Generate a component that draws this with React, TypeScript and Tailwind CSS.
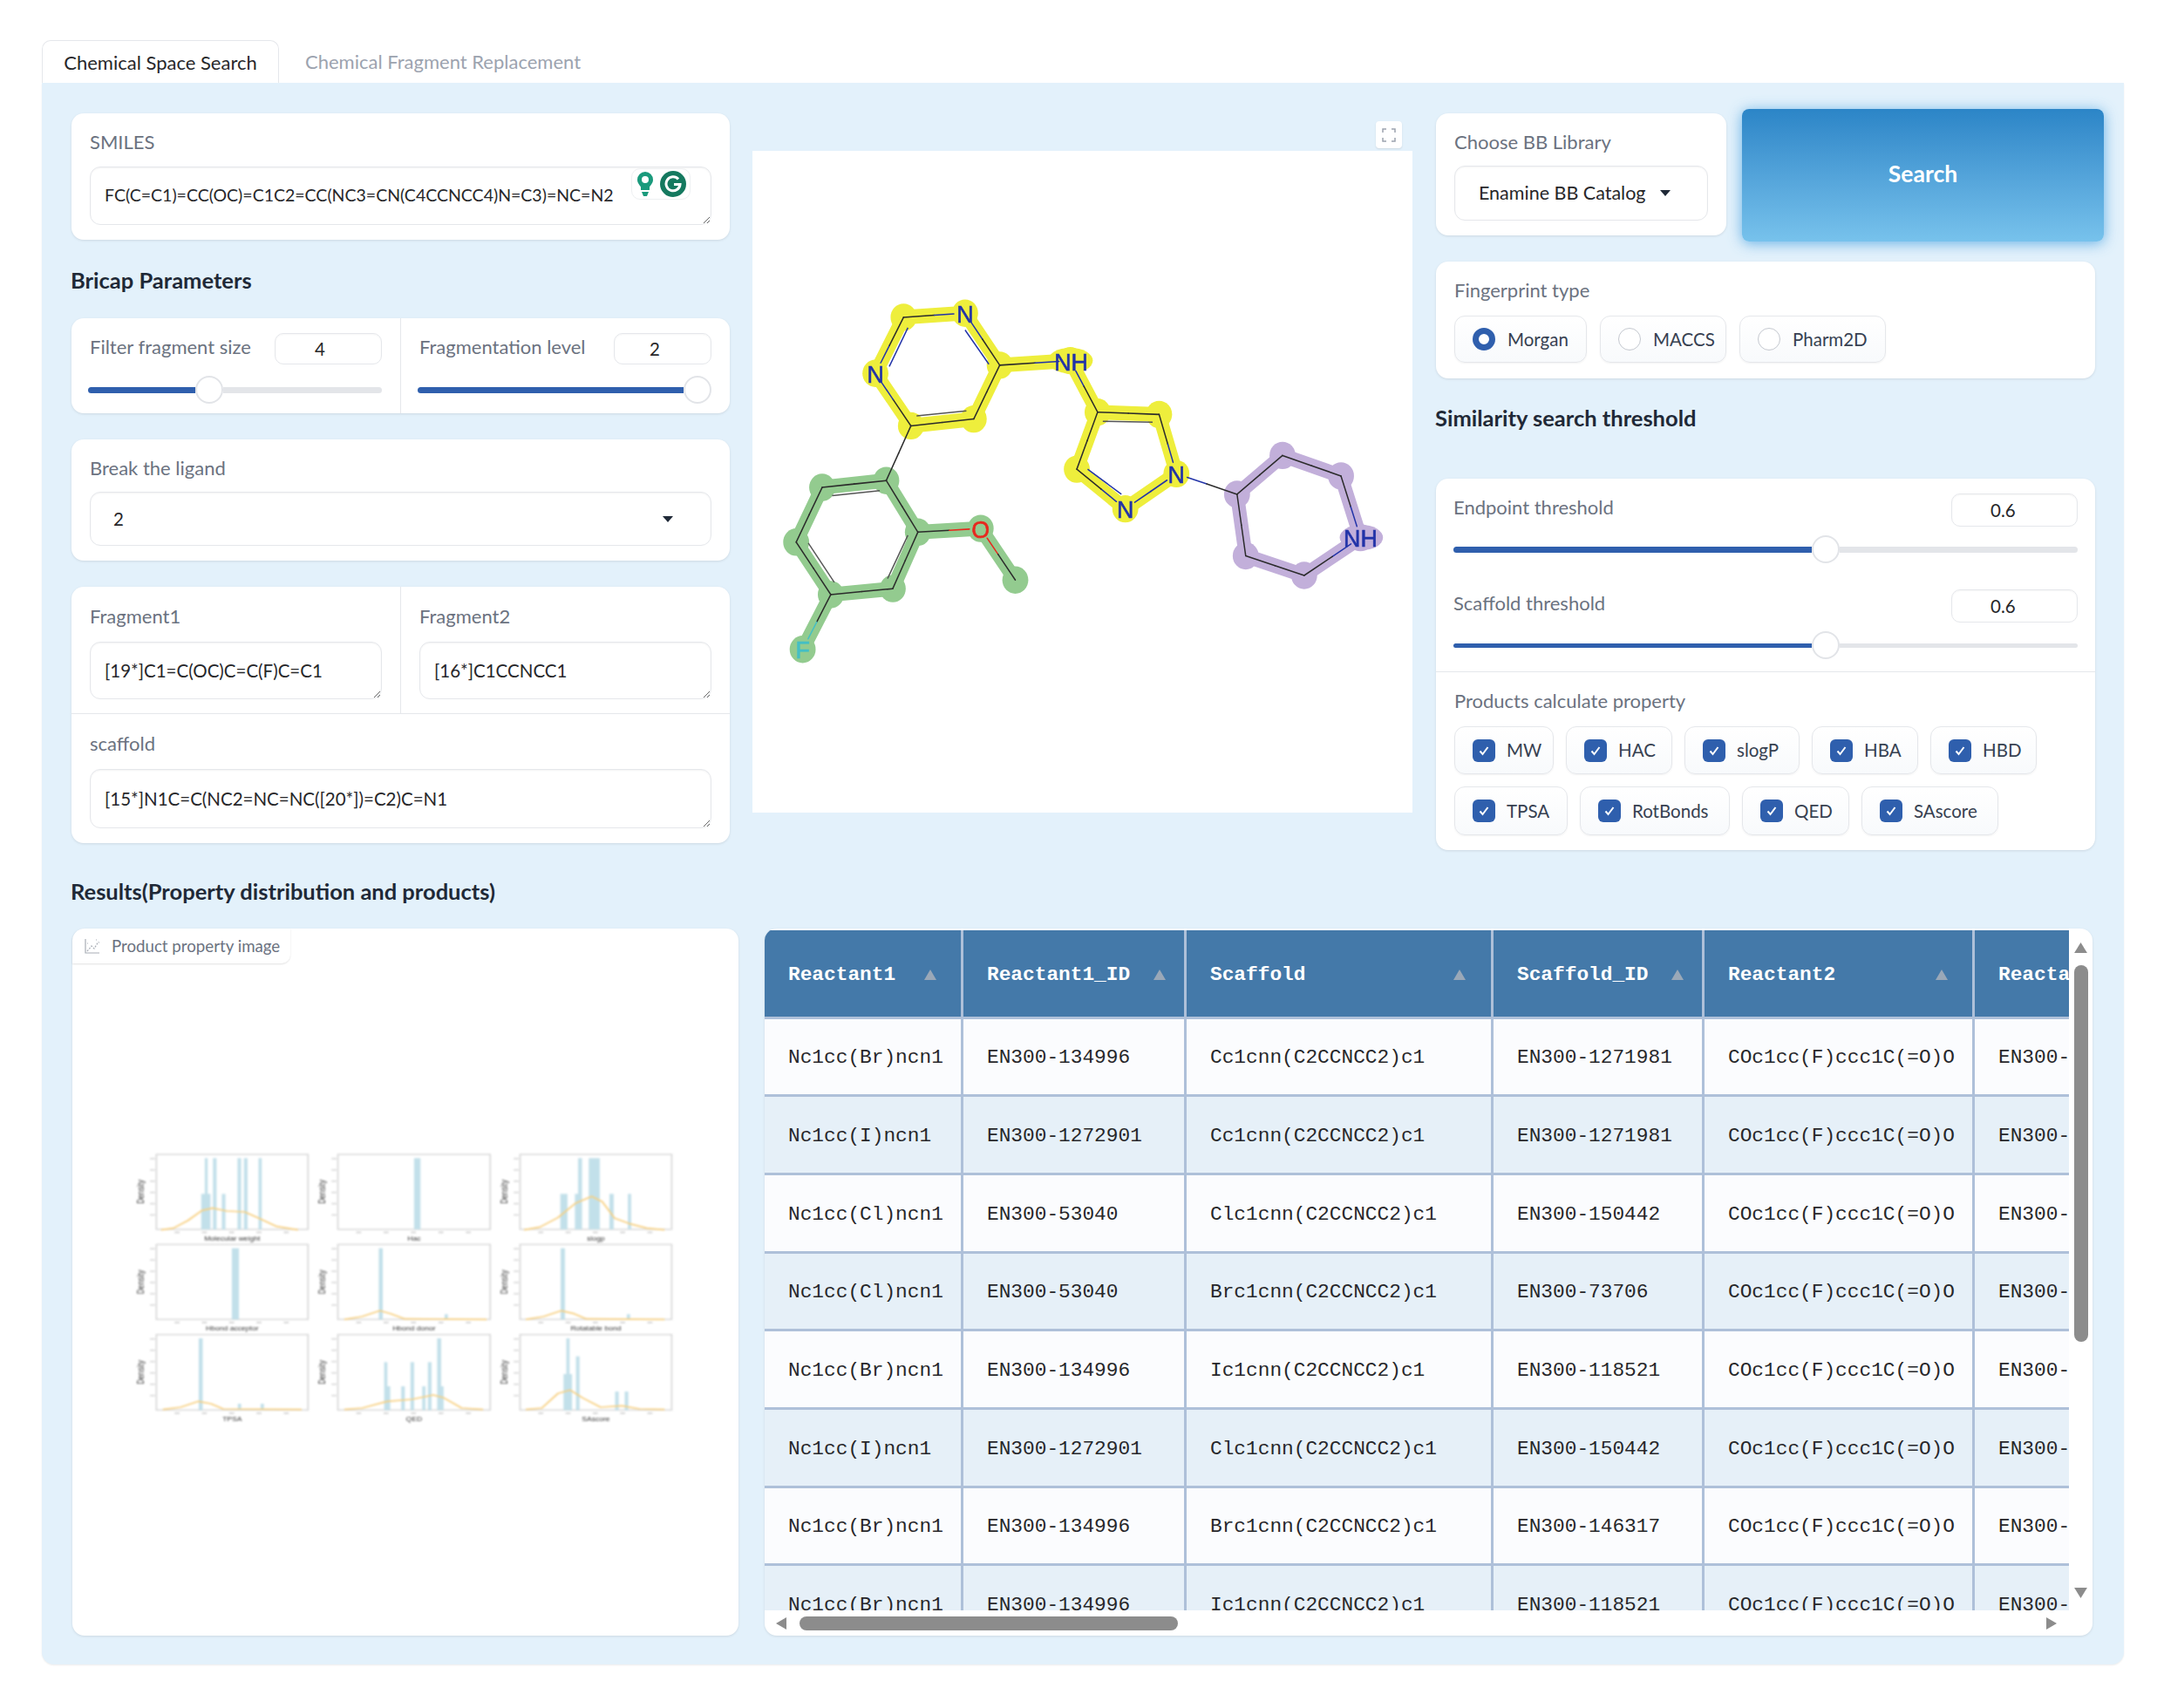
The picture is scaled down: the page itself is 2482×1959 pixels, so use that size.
import React from 'react';

const SMILES = 'FC(C=C1)=CC(OC)=C1C2=CC(NC3=CN(C4CCNCC4)N=C3)=NC=N2';

const rows = [
  ['Nc1cc(Br)ncn1', 'EN300-134996', 'Cc1cnn(C2CCNCC2)c1', 'EN300-1271981'],
  ['Nc1cc(I)ncn1', 'EN300-1272901', 'Cc1cnn(C2CCNCC2)c1', 'EN300-1271981'],
  ['Nc1cc(Cl)ncn1', 'EN300-53040', 'Clc1cnn(C2CCNCC2)c1', 'EN300-150442'],
  ['Nc1cc(Cl)ncn1', 'EN300-53040', 'Brc1cnn(C2CCNCC2)c1', 'EN300-73706'],
  ['Nc1cc(Br)ncn1', 'EN300-134996', 'Ic1cnn(C2CCNCC2)c1', 'EN300-118521'],
  ['Nc1cc(I)ncn1', 'EN300-1272901', 'Clc1cnn(C2CCNCC2)c1', 'EN300-150442'],
  ['Nc1cc(Br)ncn1', 'EN300-134996', 'Brc1cnn(C2CCNCC2)c1', 'EN300-146317'],
  ['Nc1cc(Br)ncn1', 'EN300-134996', 'Ic1cnn(C2CCNCC2)c1', 'EN300-118521'],
];

const card = 'bg-white rounded-[14px] shadow-[0_1px_3px_rgba(0,0,0,0.1)]';
const label = 'text-[22px] leading-[26px] text-[#6b7280]';
const field = 'block w-full resize-y overflow-hidden rounded-[12px] border border-[#e5e7eb] bg-white px-[16px] text-[20.5px] text-[#27272a] shadow-[inset_0_1px_2px_rgba(0,0,0,0.05)] outline-none';
const heading = 'text-[25.5px] leading-[30px] font-bold text-[#1f2937]';
const grid = 'grid grid-cols-[228px_256px_352px_242px_310px_108px]';

const Caret = () => (
  <svg width="14" height="9" viewBox="0 0 14 9"><path d="M1 1h12L7 8z" fill="#1f2937" /></svg>
);

const Slider = ({ fill, rest, bar = 'h-[7px]' }: { fill: string; rest: string; bar?: string }) => (
  <div className="flex items-center">
    <div className={`${fill} ${bar} rounded-l-full bg-[#2f5fad]`} />
    <div className="h-[32px] w-[32px] shrink-0 rounded-full border-2 border-[#e2e4e8] bg-white" />
    <div className={`${rest} ${bar} rounded-r-full bg-[#e3e5e9]`} />
  </div>
);

const NumberBox = ({ value, size, pl }: { value: string; size: string; pl: string }) => (
  <div className={`${size} ${pl} flex items-center rounded-[10px] border border-[#e5e7eb] bg-white text-[20.5px] text-[#27272a] shadow-[inset_0_1px_2px_rgba(0,0,0,0.04)]`}>
    {value}
  </div>
);

const Radio = ({ text, on, w }: { text: string; on?: boolean; w: string }) => (
  <div className={`${w} flex h-[54px] items-center gap-[14px] rounded-[12px] border border-[#e5e7eb] bg-gradient-to-b from-white to-[#f8fafc] pl-[20px] text-[20.5px] text-[#374151] shadow-[0_1px_2px_rgba(0,0,0,0.05)]`}>
    <span className={on ? 'h-[26px] w-[26px] rounded-full border-[7px] border-[#2f5fad] bg-white' : 'h-[26px] w-[26px] rounded-full border border-[#c4c8cf] bg-white'} />
    {text}
  </div>
);

const Check = ({ text, w, h }: { text: string; w: string; h: string }) => (
  <div className={`${w} ${h} flex items-center gap-[13px] rounded-[12px] border border-[#e5e7eb] bg-gradient-to-b from-white to-[#f8fafc] pl-[20px] text-[20.5px] text-[#374151] shadow-[0_1px_2px_rgba(0,0,0,0.05)]`}>
    <span className="flex h-[26px] w-[26px] items-center justify-center rounded-[6px] bg-[#2f5fad]">
      <svg width="16" height="16" viewBox="0 0 16 16"><path d="M3.5 8.5l3 3.5 6-8" fill="none" stroke="#fff" strokeWidth="2" /></svg>
    </span>
    {text}
  </div>
);

// atoms in the coordinates of the drawing
const A: Record<string, [number, number]> = {
  p1: [355, 467], p2: [497, 458], p3: [577, 572], p4: [517, 690], p5: [372, 705], p6: [290, 590],
  nh: [740, 562],
  t1: [803, 675], t2: [945, 680], t3: [985, 810], t4: [867, 887], t5: [755, 800],
  s1: [1125, 855], s2: [1230, 770], s3: [1365, 815], s4: [1410, 950], s5: [1280, 1033], s6: [1145, 990],
  b1: [315, 825], b2: [167, 840], b3: [107, 960], b4: [187, 1075], b5: [330, 1062], b6: [388, 938],
  o: [533, 930], me: [613, 1043], f: [122, 1195],
};
const hetero: Record<string, string> = {
  p2: '#2233a8', p6: '#2233a8', nh: '#2233a8', t3: '#2233a8', t4: '#2233a8', s4: '#2233a8', o: '#e8281e', f: '#45bfc4',
};
const bonds = [
  'p1-p2', 'p2-p3', 'p3-p4', 'p4-p5', 'p5-p6', 'p6-p1', 'p3-nh', 'nh-t1', 't1-t2', 't2-t3', 't3-t4', 't4-t5', 't5-t1',
  't3-s1', 's1-s2', 's2-s3', 's3-s4', 's4-s5', 's5-s6', 's6-s1', 'p5-b1', 'b1-b2', 'b2-b3', 'b3-b4', 'b4-b5', 'b5-b6', 'b6-b1',
  'b6-o', 'o-me', 'b4-f',
].map((b) => b.split('-'));
const inner = [
  [365, 490, 322, 575, '#2233a8'], [497, 495, 552, 570, '#2233a8'], [385, 683, 500, 672, '#555'], [815, 695, 930, 697, '#555'],
  [780, 800, 858, 855, '#2233a8'], [190, 858, 300, 847, '#555'], [135, 962, 195, 1048, '#555'], [318, 1040, 365, 945, '#555'],
] as const;

const glow = (ids: string[], pairs: string[], color: string, sw: number, r: number) => (
  <g stroke={color} fill={color}>
    {pairs.map((p) => {
      const [a, b] = p.split('-');
      return <line key={p} x1={A[a][0]} y1={A[a][1]} x2={A[b][0]} y2={A[b][1]} strokeWidth={sw} strokeLinecap="round" />;
    })}
    {ids.map((i) => <circle key={i} cx={A[i][0]} cy={A[i][1]} r={r} stroke="none" />)}
  </g>
);

const Molecule = () => (
  <svg className="h-full w-full blur-[0.6px]" viewBox="6 102 1524 1451" preserveAspectRatio="none">
    {glow(['p1', 'p2', 'p3', 'p4', 'p5', 'p6', 'nh', 't1', 't2', 't3', 't4', 't5'], ['p1-p2', 'p2-p3', 'p3-p4', 'p4-p5', 'p5-p6', 'p6-p1', 'p3-nh', 'nh-t1', 't1-t2', 't2-t3', 't3-t4', 't4-t5', 't5-t1'], '#eeee3c', 32, 30)}
    {glow(['b1', 'b2', 'b3', 'b4', 'b5', 'b6', 'o', 'me', 'f'], ['b1-b2', 'b2-b3', 'b3-b4', 'b4-b5', 'b5-b6', 'b6-b1', 'b6-o', 'o-me', 'b4-f'], '#93cb8f', 32, 30)}
    {glow(['s1', 's2', 's3', 's4', 's5', 's6'], ['s1-s2', 's2-s3', 's3-s4', 's4-s5', 's5-s6', 's6-s1'], '#c2afda', 32, 30)}
    <ellipse cx="740" cy="562" rx="52" ry="28" fill="#eeee3c" />
    <ellipse cx="1412" cy="950" rx="50" ry="28" fill="#c2afda" />
    {bonds.map(([a, b]) => {
      const [x1, y1] = A[a];
      const [x2, y2] = A[b];
      const len = Math.hypot(x2 - x1, y2 - y1);
      const ux = (x2 - x1) / len;
      const uy = (y2 - y1) / len;
      const ca = hetero[a] ? 26 : 0;
      const cb = hetero[b] ? 26 : 0;
      const mx = (x1 + x2) / 2;
      const my = (y1 + y2) / 2;
      return (
        <g key={a + b} strokeWidth="3" strokeLinecap="round">
          <line x1={x1 + ux * ca} y1={y1 + uy * ca} x2={mx} y2={my} stroke={hetero[a] || '#2b2b2b'} />
          <line x1={mx} y1={my} x2={x2 - ux * cb} y2={y2 - uy * cb} stroke={hetero[b] || '#2b2b2b'} />
        </g>
      );
    })}
    {inner.map(([x1, y1, x2, y2, c]) => (
      <line key={x1} x1={x1} y1={y1} x2={x2} y2={y2} stroke={c} strokeWidth="3" />
    ))}
    <g fontFamily="'Liberation Sans', sans-serif" fontSize="54" textAnchor="middle" fill="#2233a8" stroke="#2233a8" strokeWidth="1.2">
      <text x="497" y="479">N</text>
      <text x="290" y="611">N</text>
      <text x="742" y="583">NH</text>
      <text x="985" y="831">N</text>
      <text x="867" y="907">N</text>
      <text x="1410" y="970">NH</text>
      <text x="533" y="950" fill="#e8281e" stroke="#e8281e">O</text>
      <text x="122" y="1214" fill="#45bfc4" stroke="#45bfc4">F</text>
    </g>
  </svg>
);

// the property plots, drawn at the coordinates of a 1568x990 box
type Plot = { x: [number, number]; y: [number, number]; bars: number[][]; curve?: string; name: string };
const plots: Plot[] = [
  { x: [72, 498], y: [42, 300], name: 'Molecular weight', bars: [[198, 26, 178], [208, 8, 55], [231, 10, 55], [256, 10, 178], [300, 10, 55], [318, 10, 55], [359, 9, 55]], curve: '85,302 120,296 160,270 200,235 230,227 270,237 320,240 360,262 410,290 470,302' },
  { x: [582, 1010], y: [42, 300], name: 'Hac', bars: [[796, 18, 55]] },
  { x: [1094, 1520], y: [42, 300], name: 'slogp', bars: [[1207, 20, 178], [1248, 12, 178], [1257, 11, 55], [1287, 31, 55], [1345, 12, 178], [1397, 9, 178]], curve: '1105,302 1150,292 1200,260 1250,210 1295,187 1325,205 1360,262 1400,280 1450,296 1500,302' },
  { x: [72, 498], y: [352, 610], name: 'Hbond acceptor', bars: [[284, 20, 365]] },
  { x: [582, 1010], y: [352, 610], name: 'Hbond donor', bars: [[697, 11, 365], [882, 9, 592]], curve: '600,610 650,600 700,580 730,590 770,608 1000,610' },
  { x: [1094, 1520], y: [352, 610], name: 'Rotatable bond', bars: [[1208, 12, 365], [1394, 9, 592]], curve: '1110,610 1160,600 1210,580 1245,590 1280,608 1500,610' },
  { x: [72, 498], y: [662, 922], name: 'TPSA', bars: [[191, 11, 675], [301, 9, 900], [365, 9, 900]], curve: '90,920 140,912 190,892 225,900 260,918 480,920' },
  { x: [582, 1010], y: [662, 922], name: 'QED', bars: [[712, 9, 757], [720, 9, 840], [760, 10, 840], [786, 10, 757], [819, 9, 840], [835, 10, 757], [861, 11, 675], [871, 8, 840]], curve: '600,920 650,915 720,892 790,885 850,870 880,880 930,915 990,920' },
  { x: [1094, 1520], y: [662, 922], name: 'SAscore', bars: [[1216, 24, 798], [1224, 9, 675], [1251, 10, 737], [1361, 10, 858], [1388, 10, 858]], curve: '1110,920 1155,915 1200,865 1235,853 1270,880 1320,912 1380,907 1430,918 1500,920' },
];

const Plots = () => (
  <svg className="h-[330px] w-[640px] blur-[0.9px]" viewBox="0 0 1568 990" preserveAspectRatio="none">
    {plots.map((p) => {
      const [x0, x1] = p.x;
      const [y0, y1] = p.y;
      const cx = (x0 + x1) / 2;
      return (
        <g key={p.name}>
          <rect x={x0} y={y0} width={x1 - x0} height={y1 - y0} fill="#fff" stroke="#d6d6d6" strokeWidth="4" />
          {p.bars.map(([x, w, top]) => (
            <rect key={x + '-' + top} x={x} y={top} width={w} height={y1 - top} fill="#c2e0ea" />
          ))}
          {p.curve && <polyline points={p.curve} fill="none" stroke="#f8d081" strokeWidth="5" strokeLinejoin="round" />}
          {[0.12, 0.3, 0.48, 0.66, 0.84].map((t) => (
            <rect key={t} x={x0 + (x1 - x0) * t} y={y1 + 8} width="14" height="5" fill="#cfcfcf" />
          ))}
          {[0.05, 0.2, 0.35, 0.5, 0.65, 0.8].map((t) => (
            <rect key={t} x={x0 - 18} y={y0 + (y1 - y0) * t} width="14" height="4" fill="#cfcfcf" />
          ))}
          <text x={cx} y={y1 + 38} textAnchor="middle" fontSize="21" fontFamily="'Liberation Sans', sans-serif" fill="#333">{p.name}</text>
          <text transform={`translate(${x0 - 36} ${(y0 + y1) / 2}) rotate(-90)`} textAnchor="middle" fontSize="25" fontFamily="'Liberation Sans', sans-serif" fill="#333">Density</text>
        </g>
      );
    })}
  </svg>
);

const SortMark = () => (
  <svg width="16" height="14" viewBox="0 0 16 14" className="shrink-0"><path d="M8 1l7 12H1z" fill="#9aa8b8" /></svg>
);

const HeaderCell = ({ text, sort, mr }: { text: string; sort?: boolean; mr: string }) => (
  <div className="flex items-center justify-between border-r-[3px] border-[#aec0d9] pt-[3px] pl-[27px] last:border-r-0">
    <span>{text}</span>
    {sort && <span className={mr}><SortMark /></span>}
  </div>
);

export default function App() {
  return (
    <div className="min-h-[1959px] w-[2482px] bg-white pt-[46px] pb-[50px] font-['Lato','Noto_Sans',sans-serif]">
      <div className="flex h-[49px] items-stretch pl-[48px]">
        <div className="flex w-[272px] items-center justify-center rounded-t-[10px] border border-b-0 border-[#e5e7eb] bg-white text-[22px] text-[#27272a]">Chemical Space Search</div>
        <div className="flex items-center pl-[30px] text-[22px] text-[#9ca3af]">Chemical Fragment Replacement</div>
      </div>

      <div className="ml-[48px] w-[2388px] rounded-b-[14px] bg-[#e3f1fb] pt-[35px] pr-[22px] pb-[33px] pl-[34px] shadow-[0_1px_2px_rgba(0,0,0,0.08)]">
        <div className="flex h-[907px] items-start">
          {/* left column */}
          <div className="w-[755px] shrink-0">
            <div className={`${card} relative h-[145px] px-[21px] pt-[20px]`}>
              <div className={label}>SMILES</div>
              <textarea readOnly wrap="off" defaultValue={SMILES} className={`${field} mt-[15px] h-[67px] py-[18px] !text-[19.5px] leading-[28px]`} />
              <div className="absolute top-[63px] left-[642px] flex h-[36px] w-[68px] items-center justify-center gap-[7px] rounded-[10px] border border-[#eef0f2] bg-white">
                <svg width="20" height="30" viewBox="0 0 20 30">
                  <path d="M10 1a9 9 0 0 0-9 9c0 4 2.500 6 4 8.500V22h10v-3.500c1.500-2.500 4-4.500 4-8.500a9 9 0 0 0-9-9z" fill="#1a9a7c" />
                  <path d="M6 24h8l-2 5H8z" fill="#1a9a7c" />
                  <circle cx="10" cy="10" r="4" fill="#fff" />
                </svg>
                <svg width="30" height="30" viewBox="0 0 30 30">
                  <circle cx="15" cy="15" r="15" fill="#15795f" />
                  <path d="M21 9.500a8 8 0 1 0 2 6h-7" fill="none" stroke="#fff" strokeWidth="3" />
                </svg>
              </div>
            </div>

            <div className={`${heading} mt-[31px] -ml-px`}>Bricap Parameters</div>

            <div className={`${card} mt-[29px] flex h-[109px]`}>
              <div className="w-[378px] border-r border-[#e5e7eb] px-[21px] pt-[17px]">
                <div className="flex items-start justify-between">
                  <div className={`${label} mt-[3px]`}>Filter fragment size</div>
                  <NumberBox value="4" size="h-[36px] w-[123px]" pl="pl-[45px]" />
                </div>
                <div className="mt-[13px] -ml-[2px]">
                  <Slider fill="w-[123px]" rest="w-[182px]" />
                </div>
              </div>
              <div className="w-[377px] px-[21px] pt-[17px]">
                <div className="flex items-start justify-between">
                  <div className={`${label} mt-[3px]`}>Fragmentation level</div>
                  <NumberBox value="2" size="h-[36px] w-[112px]" pl="pl-[40px]" />
                </div>
                <div className="mt-[13px] -ml-[2px]">
                  <Slider fill="w-[305px]" rest="w-0" />
                </div>
              </div>
            </div>

            <div className={`${card} mt-[30px] h-[139px] px-[21px] pt-[20px]`}>
              <div className={label}>Break the ligand</div>
              <div className="mt-[14px] flex h-[62px] items-center justify-between rounded-[12px] border border-[#e5e7eb] pr-[42px] pl-[26px] text-[20.5px] text-[#27272a] shadow-[inset_0_1px_2px_rgba(0,0,0,0.05)]">
                2
                <Caret />
              </div>
            </div>

            <div className={`${card} mt-[30px] h-[294px]`}>
              <div className="flex h-[146px] border-b border-[#e5e7eb]">
                <div className="w-[378px] border-r border-[#e5e7eb] px-[21px] pt-[21px]">
                  <div className={label}>Fragment1</div>
                  <textarea readOnly wrap="off" defaultValue="[19*]C1=C(OC)C=C(F)C=C1" className={`${field} mt-[16px] h-[66px] py-[18px] leading-[28px]`} />
                </div>
                <div className="w-[377px] px-[21px] pt-[21px]">
                  <div className={label}>Fragment2</div>
                  <textarea readOnly wrap="off" defaultValue="[16*]C1CCNCC1" className={`${field} mt-[16px] h-[66px] py-[18px] leading-[28px]`} />
                </div>
              </div>
              <div className="px-[21px] pt-[21px]">
                <div className={label}>scaffold</div>
                <textarea readOnly wrap="off" defaultValue="[15*]N1C=C(NC2=NC=NC([20*])=C2)C=N1" className={`${field} mt-[16px] h-[68px] py-[19px] leading-[28px]`} />
              </div>
            </div>

            <div className={`${heading} mt-[40px] -ml-px`}>Results(Property distribution and products)</div>
          </div>

          {/* molecule */}
          <div className="relative ml-[26px] w-[757px] shrink-0 pt-[43px]">
            <div className="absolute top-[9px] right-[12px] flex h-[31px] w-[30px] items-center justify-center rounded-[4px] bg-white shadow-[0_1px_2px_rgba(0,0,0,0.1)]">
              <svg width="16" height="16" viewBox="0 0 16 16" fill="none" stroke="#9ca3af" strokeWidth="1.500">
                <path d="M1 5V1h4M11 1h4v4M15 11v4h-4M5 15H1v-4" />
              </svg>
            </div>
            <div className="h-[759px] bg-white">
              <Molecule />
            </div>
          </div>

          {/* right column */}
          <div className="ml-[27px] w-[756px] shrink-0">
            <div className="flex h-[140px] w-[766px] items-start">
              <div className={`${card} h-[140px] w-[333px] px-[21px] pt-[20px]`}>
                <div className={label}>Choose BB Library</div>
                <div className="mt-[14px] flex h-[63px] items-center gap-[15px] rounded-[12px] border border-[#e5e7eb] pl-[27px] text-[21.5px] text-[#27272a] shadow-[inset_0_1px_2px_rgba(0,0,0,0.05)]">
                  Enamine BB Catalog
                  <Caret />
                </div>
              </div>
              <div className="-mt-[5px] ml-[18px] flex h-[152px] w-[415px] items-center justify-center rounded-[8px] bg-gradient-to-b from-[#2b85c7] to-[#77c2ec] pb-[2px] text-[26.500px] font-bold text-white shadow-[0_2px_16px_rgba(70,160,225,0.8)]">
                Search
              </div>
            </div>

            <div className={`${card} mt-[30px] h-[134px] px-[21px] pt-[20px]`}>
              <div className={label}>Fingerprint type</div>
              <div className="mt-[16px] flex gap-[15px]">
                <Radio text="Morgan" on w="w-[152px]" />
                <Radio text="MACCS" w="w-[145px]" />
                <Radio text="Pharm2D" w="w-[168px]" />
              </div>
            </div>

            <div className={`${heading} mt-[30px] -ml-px`}>Similarity search threshold</div>

            <div className={`${card} mt-[55px] h-[426px]`}>
              <div className="h-[222px] border-b border-[#e5e7eb] px-[20px] pt-[17px]">
                <div className="flex items-start justify-between">
                  <div className={`${label} mt-[3px]`}>Endpoint threshold</div>
                  <NumberBox value="0.6" size="h-[38px] w-[145px]" pl="pl-[44px]" />
                </div>
                <div className="mt-[10px]">
                  <Slider fill="w-[411px]" rest="w-[273px]" />
                </div>
                <div className="mt-[30px] flex items-start justify-between">
                  <div className={`${label} mt-[3px]`}>Scaffold threshold</div>
                  <NumberBox value="0.6" size="h-[38px] w-[145px]" pl="pl-[44px]" />
                </div>
                <div className="mt-[10px]">
                  <Slider fill="w-[411px]" rest="w-[273px]" bar="h-[5px]" />
                </div>
              </div>
              <div className="px-[21px] pt-[20px]">
                <div className={label}>Products calculate property</div>
                <div className="mt-[16px] flex gap-[14px]">
                  <Check text="MW" w="w-[114px]" h="h-[55px]" />
                  <Check text="HAC" w="w-[122px]" h="h-[55px]" />
                  <Check text="slogP" w="w-[132px]" h="h-[55px]" />
                  <Check text="HBA" w="w-[122px]" h="h-[55px]" />
                  <Check text="HBD" w="w-[122px]" h="h-[55px]" />
                </div>
                <div className="mt-[14px] flex gap-[14px]">
                  <Check text="TPSA" w="w-[130px]" h="h-[56px]" />
                  <Check text="RotBonds" w="w-[172px]" h="h-[56px]" />
                  <Check text="QED" w="w-[123px]" h="h-[56px]" />
                  <Check text="SAscore" w="w-[157px]" h="h-[56px]" />
                </div>
              </div>
            </div>
          </div>
        </div>

        <div className="mt-[28px] flex h-[811px] items-start">
          {/* property image */}
          <div className={`${card} ml-px h-[811px] w-[764px] shrink-0`}>
            <div className="flex h-[40px] w-[250px] items-center gap-[13px] rounded-tl-[14px] rounded-br-[10px] pl-[14px] text-[18.700px] text-[#6b7280] shadow-[0_1px_2px_rgba(0,0,0,0.12)]">
              <svg width="18" height="18" viewBox="0 0 18 18" fill="none" stroke="#a8adb5" strokeWidth="1.200">
                <path d="M1 1v16h16" />
                <path d="M3 15l5-6 3 3 5-8" strokeDasharray="2 1.500" />
                <path d="M13 2h1M16 5h1M3 6h1" />
              </svg>
              Product property image
            </div>
            <div className="mt-[205px] ml-[67px]">
              <Plots />
            </div>
          </div>

          {/* products table */}
          <div className={`${card} ml-[30px] flex h-[811px] w-[1523px] shrink-0 flex-col overflow-hidden pt-[2px]`}>
            <div className="flex h-[780px]">
              <div className="h-[780px] w-[1496px] shrink-0 overflow-hidden font-['Liberation_Mono',monospace] text-[22.800px]">
                <div className={`${grid} h-[101.500px] border-b-[3px] border-[#aec0d9] bg-[#4479a9] font-bold text-white`}>
                  <HeaderCell text="Reactant1" sort mr="mr-[27px]" />
                  <HeaderCell text="Reactant1_ID" sort mr="mr-[20px]" />
                  <HeaderCell text="Scaffold" sort mr="mr-[28px]" />
                  <HeaderCell text="Scaffold_ID" sort mr="mr-[20px]" />
                  <HeaderCell text="Reactant2" sort mr="mr-[27px]" />
                  <HeaderCell text="Reacta" mr="" />
                </div>
                {rows.map((r, i) => (
                  <div key={i} className={`${grid} h-[89.700px] border-b-[3px] border-[#aec0d9] text-[#27272a] ${i % 2 ? 'bg-[#e6f0f8]' : 'bg-[#fbfcfe]'}`}>
                    {[...r, 'COc1cc(F)ccc1C(=O)O', 'EN300-'].map((c, j) => (
                      <div key={j} className="flex items-center border-r-[3px] border-[#aec0d9] pt-[3px] pl-[27px] whitespace-nowrap last:border-r-0">{c}</div>
                    ))}
                  </div>
                ))}
              </div>
              <div className="flex w-[27px] flex-col items-center pt-[13px]">
                <svg width="17" height="14" viewBox="0 0 16 14" preserveAspectRatio="none"><path d="M8 1l7 12H1z" fill="#8c8c8c" /></svg>
                <div className="mt-[13px] h-[432px] w-[16px] rounded-full bg-[#8c8c8c]" />
                <svg className="mt-[281px]" width="17" height="14" viewBox="0 0 16 14" preserveAspectRatio="none"><path d="M8 13L1 1h14z" fill="#8c8c8c" /></svg>
              </div>
            </div>
            <div className="flex h-[29px] items-center pl-[12px]">
              <svg width="14" height="16" viewBox="0 0 14 16"><path d="M1 8l12-7v14z" fill="#8c8c8c" /></svg>
              <div className="ml-[14px] h-[16px] w-[434px] rounded-full bg-[#8c8c8c]" />
              <svg className="ml-[995px]" width="14" height="16" viewBox="0 0 14 16"><path d="M13 8L1 1v14z" fill="#8c8c8c" /></svg>
            </div>
          </div>
        </div>
      </div>
    </div>
  );
}
